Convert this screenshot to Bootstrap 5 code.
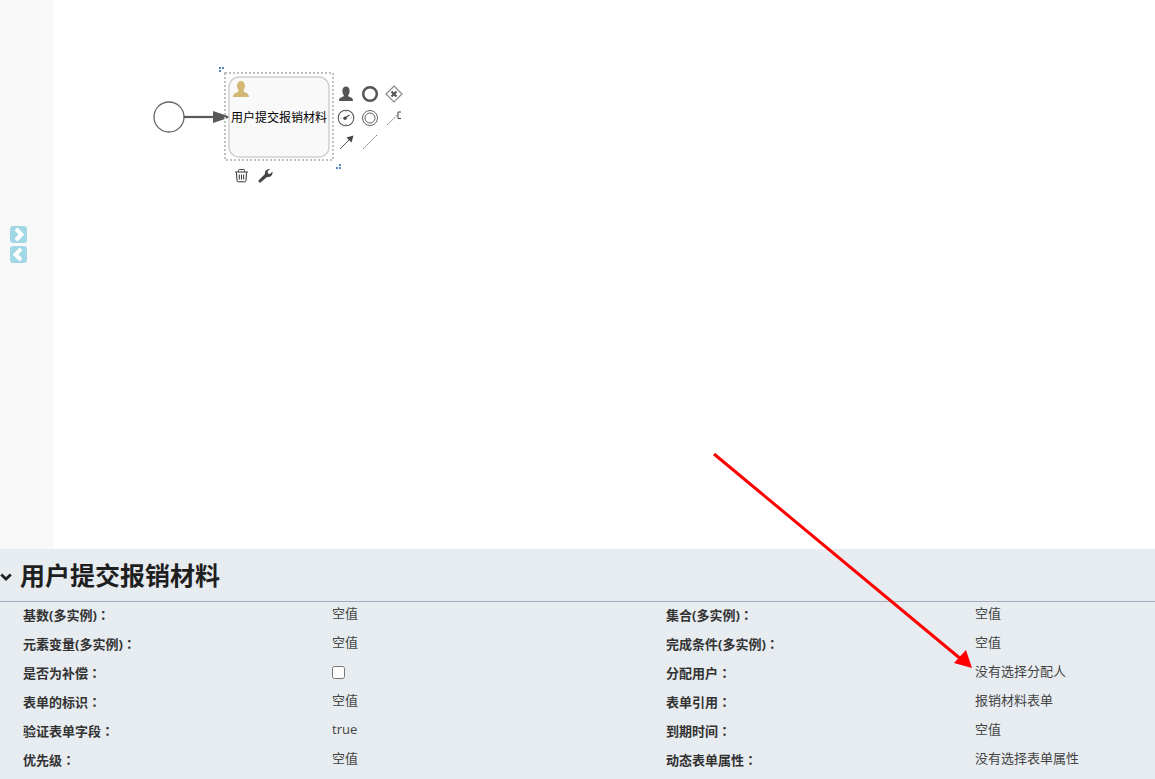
<!DOCTYPE html>
<html lang="en">
<head>
    <meta charset="UTF-8">
    <meta name="viewport" content="width=device-width, initial-scale=1, shrink-to-fit=no">
    <title>流程设计器</title>
    <link href="https://cdn.jsdelivr.net/npm/bootstrap@5.3.0/dist/css/bootstrap.min.css" rel="stylesheet">
    <style>
        html, body { height: 100%; overflow: hidden; }
        body { font-family: "Open Sans", "Noto Sans CJK SC", sans-serif; background: #fff; color: #333; }
        .page-wrap { position: relative; width: 1155px; height: 779px; overflow: hidden; }
        .editor-area { height: 549px; }
        .palette-bar { width: 54px; background: #f8f8f8; gap: 3px; padding-left: 10px; padding-top: 226px; }
        .toggle-btn { width: 17px; height: 17px; display: block; }
        .canvas-area { position: relative; }
        .diagram { position: absolute; left: 0; top: 0; }
        .task-label { font-family: "Noto Sans CJK SC", sans-serif; font-size: 12px; fill: #000; }
        .props-panel { background: #e7ecf1; height: 230px; }
        .props-head { height: 53px; border-bottom: 1px solid #a6a9bb; gap: 8px; }
        .props-head svg { margin-top: 3px; }
        .props-title { font-family: "Noto Sans CJK SC", sans-serif; font-size: 25px; line-height: 50px; font-weight: 700; color: #1f1f1f; margin: 0 0 2px; }
        .props-grid { display: grid; grid-template-columns: 309px 334px 309px 1fr; grid-auto-rows: 29px; padding-left: 23px; }
        .prop-name { font-size: 13px; font-weight: 700; color: #333; line-height: 18px; padding-top: 4px; }
        .colon-mark { font-family: "Noto Sans CJK TC", sans-serif; }
        .prop-value { font-size: 13px; color: #444; line-height: 18px; padding-top: 2px; }
        .prop-check { width: 13px; height: 13px; margin: 4px 0 0; border: 1px solid #767676; border-radius: 2px; background: #fff; display: block; }
        .red-arrow { position: absolute; left: 0; top: 0; pointer-events: none; }
    </style>
</head>
<body>
    <div class="page-wrap">
        <div class="editor-area d-flex">
            <div class="palette-bar d-flex flex-column flex-shrink-0">
                <svg class="toggle-btn" viewBox="0 0 17 17"><rect width="17" height="17" rx="3" fill="#a2d7e5"/><path d="M6 3 11.500 8.500 6 14" fill="none" stroke="#fff" stroke-width="4"/></svg>
                <svg class="toggle-btn" viewBox="0 0 17 17"><rect width="17" height="17" rx="3" fill="#a2d7e5"/><path d="M11 3 5.500 8.500 11 14" fill="none" stroke="#fff" stroke-width="4"/></svg>
            </div>
            <div class="canvas-area flex-grow-1">
                <!-- offset by the 54px palette bar -->
                <svg class="diagram" width="400" height="200" viewBox="54 0 400 200">
                    <circle cx="169" cy="117" r="15" fill="#fff" stroke="#666" stroke-width="1.300"/>
                    <path d="M184 117H214" stroke="#585858" stroke-width="2.200"/>
                    <path d="M213 111 231 117 213 123Z" fill="#585858"/>

                    <rect x="225" y="73" width="108" height="87" fill="none" stroke="#c0c0c0" stroke-width="2" stroke-dasharray="2 2"/>
                    <rect x="229" y="77" width="100" height="80" rx="10" fill="#f9f9f9" stroke="#d0d0d0" stroke-width="1.500"/>
                    <ellipse cx="241" cy="86" rx="4" ry="5" fill="#d3b874"/>
                    <path d="M233 97c0-3.500 2.500-4 5-5l.5-2h5l.5 2c2.500 1 5 1.500 5 5Z" fill="#d3b874"/>
                    <text class="task-label" x="231" y="121.500">用户提交报销材料</text>

                    <path d="M219 67h2v2h-2zM222 67h2v2h-2zM219 70h2v2h-2z" fill="#5b86bd"/>
                    <path d="M339 164h2v2h-2zM336 167h2v2h-2zM339 167h2v2h-2z" fill="#5b86bd"/>

                    <!-- user task -->
                    <ellipse cx="346" cy="91" rx="3.600" ry="4.500" fill="#555"/>
                    <path d="M339 101c0-3.500 2-3.500 4.500-4.500l.5-2h4l.5 2c2.500 1 4.500 1 4.500 4.500Z" fill="#555"/>
                    <!-- end event -->
                    <circle cx="370" cy="94" r="6.800" fill="none" stroke="#555" stroke-width="2.500"/>
                    <!-- gateway -->
                    <path d="M394 86 402 94 394 102 386 94Z" fill="#fff" stroke="#888" stroke-width="1.200"/>
                    <path d="M391.500 91.500 396.500 96.500M396.500 91.500 391.500 96.500" stroke="#555" stroke-width="2.200"/>
                    <!-- timer -->
                    <circle cx="346" cy="118" r="7.800" fill="#fff" stroke="#555" stroke-width="1.100"/>
                    <path d="M346 111V112.500M352 118H350.500M340 118H341.500M346 125V123.500" stroke="#999" stroke-width=".8"/>
                    <path d="M349.500 115 345 118" fill="none" stroke="#444" stroke-width="1.200"/>
                    <circle cx="345" cy="118.200" r="1.700" fill="#444"/>
                    <!-- intermediate -->
                    <circle cx="370" cy="118" r="7.500" fill="none" stroke="#666" stroke-width="1"/>
                    <circle cx="370" cy="118" r="5" fill="none" stroke="#666" stroke-width="1"/>
                    <!-- association with note -->
                    <path d="M387 125 398 114.500" stroke="#555" stroke-width=".8" stroke-dasharray="2 1"/>
                    <path d="M401 112h-3v6.500h3" fill="none" stroke="#444" stroke-width="1"/>
                    <!-- flow -->
                    <path d="M340 149 349 140" stroke="#555" stroke-width="1"/>
                    <path d="M353.500 135.500 351.500 142.500 346.500 137.500Z" fill="#444"/>
                    <!-- dashed -->
                    <path d="M363 149 377 135" stroke="#555" stroke-width=".8" stroke-dasharray="2 1"/>
                    <!-- trash -->
                    <path d="M236.500 172.500 237 180.500C237 181.300 237.500 181.800 238.300 181.800H244.700C245.500 181.800 246 181.300 246 180.500L246.500 172.500M235 172H248M238.500 171.800V170.500C238.500 169.800 239 169.500 239.500 169.500H243.500C244 169.500 244.500 169.800 244.500 170.500V171.800M239.300 174.500V179.500M241.500 174.500V179.500M243.700 174.500V179.500" fill="none" stroke="#333" stroke-width="1"/>
                    <!-- wrench -->
                    <path d="M258.500 180.500 265 174C264.500 171.500 266 169 270 169L267.500 171.500 268 173.500 270 174 272.500 171.500C273 175 270.500 177.500 267 177L260.500 182.500C259.500 183 258 181.500 258.500 180.500Z" fill="#444"/>
                </svg>
            </div>
        </div>
        <div class="props-panel">
            <div class="props-head d-flex align-items-center">
                <svg width="12" height="8" viewBox="0 0 12 8"><path d="M1.200 1.500 6 6 10.800 1.500" fill="none" stroke="#222" stroke-width="2.800"/></svg>
                <h2 class="props-title">用户提交报销材料</h2>
            </div>
            <div class="props-grid">
                <div class="prop-name">基数(多实例)<span class="colon-mark">：</span></div><div class="prop-value">空值</div>
                <div class="prop-name">集合(多实例)<span class="colon-mark">：</span></div><div class="prop-value">空值</div>
                <div class="prop-name">元素变量(多实例)<span class="colon-mark">：</span></div><div class="prop-value">空值</div>
                <div class="prop-name">完成条件(多实例)<span class="colon-mark">：</span></div><div class="prop-value">空值</div>
                <div class="prop-name">是否为补偿<span class="colon-mark">：</span></div><div class="prop-value"><input class="prop-check" type="checkbox" aria-label="是否为补偿"></div>
                <div class="prop-name">分配用户<span class="colon-mark">：</span></div><div class="prop-value">没有选择分配人</div>
                <div class="prop-name">表单的标识<span class="colon-mark">：</span></div><div class="prop-value">空值</div>
                <div class="prop-name">表单引用<span class="colon-mark">：</span></div><div class="prop-value">报销材料表单</div>
                <div class="prop-name">验证表单字段<span class="colon-mark">：</span></div><div class="prop-value">true</div>
                <div class="prop-name">到期时间<span class="colon-mark">：</span></div><div class="prop-value">空值</div>
                <div class="prop-name">优先级<span class="colon-mark">：</span></div><div class="prop-value">空值</div>
                <div class="prop-name">动态表单属性<span class="colon-mark">：</span></div><div class="prop-value">没有选择表单属性</div>
            </div>
        </div>
        <!-- annotation drawn over the page -->
        <svg class="red-arrow" width="1155" height="779" viewBox="0 0 1155 779">
            <path d="M714 454 962 660" stroke="#f00" stroke-width="3"/>
            <path d="M972 668 954 663 966 650Z" fill="#f00"/>
        </svg>
    </div>
    <script src="https://cdn.jsdelivr.net/npm/bootstrap@5.3.0/dist/js/bootstrap.bundle.min.js"></script>
</body>
</html>
